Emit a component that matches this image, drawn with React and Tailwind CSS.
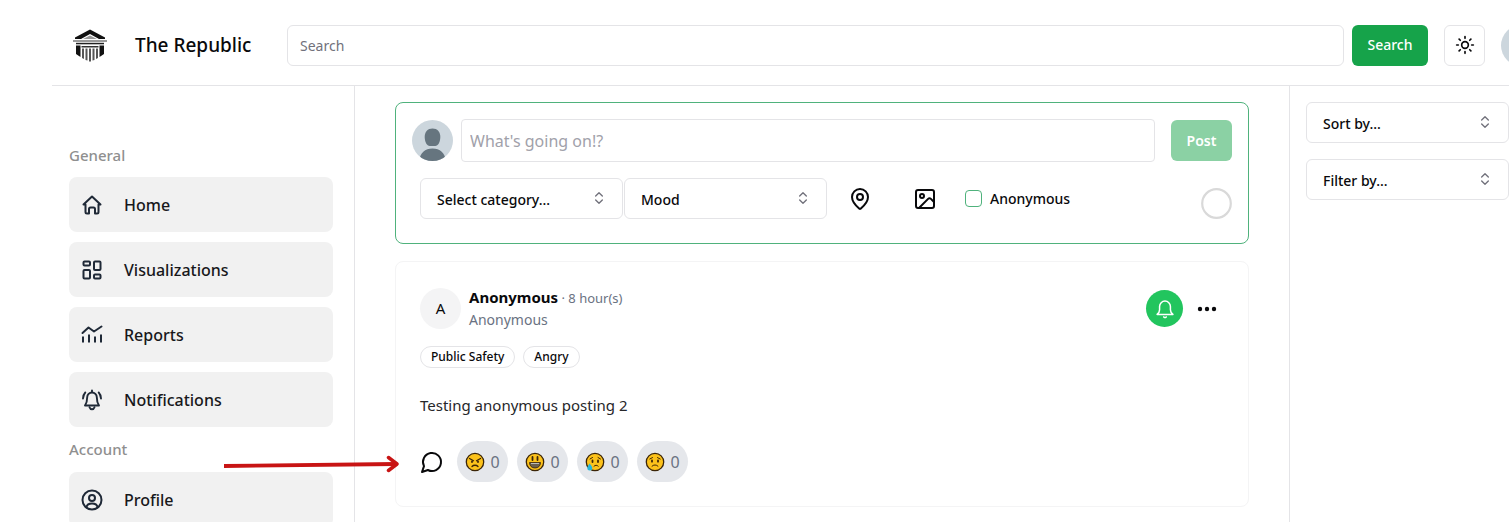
import { ChevronsUpDown, MapPin, Image, Sun } from "lucide-react";

const stroke = {
  viewBox: "0 0 24 24",
  fill: "none",
  stroke: "currentColor",
  strokeWidth: 2,
  strokeLinecap: "round",
  strokeLinejoin: "round",
  "aria-hidden": true,
};

function HomeIcon() {
  return (
    <svg {...stroke} className="size-6">
      <path d="M5.500 11.500H3.500L12 3.500l8.500 8H18.500V19a1.500 1.500 0 0 1-1.500 1.500h-2V16a1.500 1.500 0 0 0-1.500-1.500h-3A1.500 1.500 0 0 0 9 16v4.500H7A1.500 1.500 0 0 1 5.500 19z" />
    </svg>
  );
}

function DashboardIcon() {
  return (
    <svg {...stroke} className="size-6">
      <rect x="3.500" y="3.500" width="6.500" height="4" rx="1" />
      <rect x="14" y="3.500" width="6.500" height="8.500" rx="1" />
      <rect x="3.500" y="12" width="6.500" height="8.500" rx="1" />
      <rect x="14" y="16.500" width="6.500" height="4" rx="1" />
    </svg>
  );
}

function ReportsIcon() {
  return (
    <svg {...stroke} className="size-6">
      <path d="m2.500 10 6-5.500 5.500 4L21.500 3.500" />
      <path strokeLinecap="butt" d="M3 13.500V19.500M9 11.500V19.500M15 13.500V19.500M21 11.500V19.500" />
    </svg>
  );
}

function RingingBellIcon() {
  return (
    <svg {...stroke} strokeWidth="1.900" className="size-6">
      <path d="M12 2.500v2M12 4.500a4.800 4.800 0 0 0-4.800 4.800c0 4-.7 6-2.200 8.200h14c-1.500-2.200-2.200-4.200-2.200-8.200A4.800 4.800 0 0 0 12 4.500z" />
      <path d="M9.500 19.200c.5 1.600 1.400 2 2.500 2s2-.4 2.500-2" />
      <path d="M5.300 4.500C3.800 6 3.200 8 3 10.500M18.700 4.500c1.500 1.500 2.100 3.500 2.300 6" />
    </svg>
  );
}

function ProfileIcon() {
  return (
    <svg {...stroke} className="size-6">
      <circle cx="12" cy="12" r="9.500" />
      <circle cx="12" cy="10" r="3" />
      <path d="M6.500 19c.5-2.500 2.500-3.500 5.500-3.500s5 1 5.500 3.500" />
    </svg>
  );
}

function Logo() {
  return (
    <svg viewBox="0 0 36 34" className="h-[34px] w-9" aria-label="The Republic logo" role="img">
      <path d="M18 1.500 3 9.500v1.500h6L18 6l9 5h6V9.500z" fill="#111" />
      <path d="M18 7.500 11 11h14z" fill="#999" />
      <path d="M1 12.200h34v1.600H1z" fill="#777" />
      <path d="M4 14.800h28v1.500H4z" fill="#222" />
      <path d="M4 17.500h4.500V29L4 26zM27.500 17.500H32V26l-4.500 3z" fill="#111" />
      <path d="M9.500 18h17v1.500h-17z" fill="#333" />
      <path d="M10 20.500h2V31l-2-1zM13.500 20.500h2V32.500l-2-.6zM17 20.500h2V33.500h-2zM20.500 20.500h2v11.400l-2 .6zM24 20.500h2V30l-2 1z" fill="#555" />
    </svg>
  );
}

function PersonAvatar() {
  return (
    <svg viewBox="0 0 41 41" className="size-[41px] shrink-0" aria-hidden="true">
      <clipPath id="disc">
        <circle cx="20.500" cy="20.500" r="20.500" />
      </clipPath>
      <circle cx="20.500" cy="20.500" r="20.500" fill="#ccd6dd" />
      <g fill="#66757f" clipPath="url(#disc)">
        <path d="M20.500 8.500c4.800 0 7.800 3.200 7.800 8.500 0 5-2.300 9-5 9h-5.600c-2.700 0-5-4-5-9 0-5.300 3-8.500 7.800-8.500z" />
        <path d="M7 41c1-8 6-12.500 13.500-12.500S33 33 34 41z" />
      </g>
    </svg>
  );
}

function Emoji({ mood }) {
  const dark = "#3b2508";
  return (
    <svg viewBox="0 0 20 20" className="size-5" role="img" aria-label={mood}>
      <circle cx="10" cy="10" r="8.700" fill="#fcc21b" stroke={dark} strokeWidth="1.300" />
      {mood === "angry" && (
        <g fill="none" stroke={dark} strokeWidth="1.300" strokeLinecap="round">
          <path d="m4.500 6.500 4 2.200M15.500 6.500l-4 2.200M7 14.500c1.500-1.700 4.500-1.700 6 0" />
          <path strokeWidth="1.800" d="M7 9.300v.7M13 9.300v.7" />
        </g>
      )}
      {mood === "happy" && (
        <g>
          <path d="M7.500 5v3M12.500 5v3" stroke={dark} strokeWidth="1.800" strokeLinecap="round" />
          <path d="M4.500 10.500h11c0 3.500-2.300 5.500-5.500 5.500s-5.500-2-5.500-5.500z" fill="#6b5f4c" stroke={dark} strokeWidth=".8" />
          <path d="M6 11h8v1H6z" fill="#bbb" />
        </g>
      )}
      {mood === "crying" && (
        <g>
          <path d="M7.500 8.500v1.500M13 8.500v1.500" stroke={dark} strokeWidth="1.800" strokeLinecap="round" />
          <path d="m5 7 2.500-1.500M15.500 7 13 5.500M9 14.200c1.200-1.300 3-1.300 4.200 0" fill="none" stroke={dark} strokeLinecap="round" />
          <path d="M4.500 11.500c1.700 2 2.800 3 2.800 4.500a2.500 2.500 0 0 1-5 0c0-1.500 1.200-2.500 2.200-4.500z" fill="#29b6d8" />
        </g>
      )}
      {mood === "worried" && (
        <g>
          <path d="M7 8.500v1.200M13 8.500v1.200" stroke={dark} strokeWidth="1.800" strokeLinecap="round" />
          <path d="m4.800 7 2.700-1.400M15.200 7l-2.700-1.400M7 14.200c1.500-1.700 4.500-1.700 6 0" fill="none" stroke={dark} strokeLinecap="round" />
        </g>
      )}
    </svg>
  );
}

function NavItem({ icon, label }) {
  return (
    <li>
      <a href="#" className="flex h-[55px] items-center gap-5 rounded-lg bg-[#f1f1f1] px-[11px] text-base font-medium text-[#18181b]">
        <span className="text-[#1f2937]">{icon}</span>
        {label}
      </a>
    </li>
  );
}

function Select({ label, name }) {
  return (
    <div className="relative w-[203px] shrink-0">
      <select
        aria-label={name}
        className="block h-[41px] w-full appearance-none rounded-md border border-zinc-200 bg-white pt-0.5 pr-10 pl-4 text-sm font-medium text-zinc-950"
      >
        <option>{label}</option>
      </select>
      <ChevronsUpDown className="pointer-events-none absolute top-3 right-4 size-4 text-zinc-500" />
    </div>
  );
}

function Reaction({ mood }) {
  return (
    <button className="flex h-[41px] w-[51px] items-center justify-center gap-[5px] rounded-full bg-gray-200 text-base text-gray-500">
      <Emoji mood={mood} />0
    </button>
  );
}

function Tag({ children }) {
  return (
    <span className="flex h-[22px] items-center rounded-full border border-zinc-200 px-2.5 text-xs font-medium text-zinc-950">
      {children}
    </span>
  );
}

export default function App() {
  return (
    <div className="relative flex min-h-screen flex-col overflow-hidden bg-white pl-[52px] font-['Noto_Sans','Open_Sans',sans-serif] text-zinc-950">
      <header className="flex h-[86px] shrink-0 items-center border-b border-zinc-200 pt-[5px] pl-5">
        <a href="#" className="flex w-[215px] shrink-0 items-center gap-[27px] text-[19px] font-medium">
          <Logo />
          The Republic
        </a>
        <form className="-mr-[33px] flex flex-1 items-center gap-2">
          <input
            aria-label="Search"
            placeholder="Search"
            className="h-[41px] min-w-0 flex-1 rounded-md border border-zinc-200 px-3 text-sm placeholder:text-zinc-500"
          />
          <button type="button" className="h-[41px] w-[76px] rounded-md bg-[#16a34a] text-sm font-medium text-white">
            Search
          </button>
          <button
            type="button"
            aria-label="Toggle theme"
            className="mx-2 flex size-[41px] items-center justify-center rounded-md border border-zinc-200"
          >
            <Sun className="size-5" />
          </button>
          <PersonAvatar />
        </form>
      </header>

      <div className="flex flex-1">
        <nav className="w-[303px] shrink-0 border-r border-zinc-200 pt-[57px] pr-[21px] pl-[17px]">
          <h2 className="text-[15px] leading-6 font-medium text-[#8f8f8f]">General</h2>
          <ul className="mt-2.5 flex flex-col gap-2.5">
            <NavItem icon={<HomeIcon />} label="Home" />
            <NavItem icon={<DashboardIcon />} label="Visualizations" />
            <NavItem icon={<ReportsIcon />} label="Reports" />
            <NavItem icon={<RingingBellIcon />} label="Notifications" />
          </ul>
          <h2 className="mt-2.5 text-[15px] leading-6 font-medium text-[#8f8f8f]">Account</h2>
          <ul className="mt-[11px] h-[50px]">
            <NavItem icon={<ProfileIcon />} label="Profile" />
          </ul>
        </nav>

        <main className="flex min-w-0 flex-1 flex-col items-stretch gap-[17px] px-10 pt-4">
          <form className="rounded-lg border border-[#4fb27c] px-4 pt-4 pb-6">
            <div className="flex items-center">
              <PersonAvatar />
              <input
                aria-label="Post text"
                placeholder="What's going on!?"
                className="mr-4 ml-2 h-[43px] min-w-0 flex-1 rounded-sm border border-zinc-200 px-2 text-base placeholder:text-[#a1a1aa]"
              />
              <button type="button" disabled className="h-[41px] w-[61px] rounded-md bg-[#8bd1a4] text-sm font-semibold text-white">
                Post
              </button>
            </div>
            <div className="mt-4 flex items-center pl-2">
              <Select label="Select category..." name="Category" />
              <div className="w-px" />
              <Select label="Mood" name="Mood" />
              <button type="button" aria-label="Add location" className="ml-[21px]">
                <MapPin className="size-6" />
              </button>
              <button type="button" aria-label="Add image" className="ml-[41px]">
                <Image className="size-6" />
              </button>
              <input
                id="anonymous"
                type="checkbox"
                className="ml-7 size-[17px] appearance-none rounded-sm border border-[#4fb27c] bg-white"
              />
              <label htmlFor="anonymous" className="ml-2 text-sm font-medium">
                Anonymous
              </label>
              <svg viewBox="0 0 31 31" className="ml-auto size-[31px] self-end" aria-hidden="true">
                <circle cx="15.500" cy="15.500" r="14.300" fill="none" stroke="#d9d9d9" strokeWidth="2.200" />
              </svg>
            </div>
          </form>

          <article className="rounded-lg border border-zinc-100 p-6">
            <div className="flex items-center pr-[5px]">
              <div className="flex size-[41px] items-center justify-center rounded-full bg-zinc-100 text-[15px]">A</div>
              <div className="ml-2 flex-1 text-sm leading-[22px] text-gray-500">
                <p>
                  <strong className="text-[15px] font-bold text-zinc-950">Anonymous</strong>
                  <span className="text-[13px]"> · 8 hour(s)</span>
                </p>
                <p>Anonymous</p>
              </div>
              <button aria-label="Follow post" className="flex size-[37px] items-center justify-center rounded-full bg-[#22c55e] text-white">
                <svg {...stroke} strokeWidth="1.800" className="size-5">
                  <path d="M2.500 18.500h19c-2-1.500-3-3-3-5.500V9a6.500 6.500 0 0 0-13 0v4c0 2.500-1 4-3 5.500z" />
                  <path d="M10.500 21.500c.8.800 2.200.8 3 0" />
                </svg>
              </button>
              <button aria-label="More options" className="ml-3">
                <svg viewBox="0 0 24 24" className="size-6" fill="currentColor" aria-hidden="true">
                  <circle cx="5" cy="12" r="2.200" />
                  <circle cx="12" cy="12" r="2.200" />
                  <circle cx="19" cy="12" r="2.200" />
                </svg>
              </button>
            </div>
            <div className="mt-[15px] flex gap-2">
              <Tag>Public Safety</Tag>
              <Tag>Angry</Tag>
            </div>
            <p className="mt-[25px] text-[15px] leading-6 text-zinc-800">Testing anonymous posting 2</p>
            <div className="mt-6 flex items-center gap-[9px]">
              <button aria-label="Comments" className="mr-1">
                <svg {...stroke} className="size-6">
                  <path d="M7.900 20A9 9 0 1 0 4 16.100L2 22Z" />
                </svg>
              </button>
              <Reaction mood="angry" />
              <Reaction mood="happy" />
              <Reaction mood="crying" />
              <Reaction mood="worried" />
            </div>
          </article>
        </main>

        <aside className="flex w-[220px] shrink-0 flex-col gap-4 border-l border-zinc-200 pt-4 pl-4">
          <Select label="Sort by..." name="Sort" />
          <Select label="Filter by..." name="Filter" />
        </aside>
      </div>

      <svg viewBox="0 0 176 18" className="pointer-events-none absolute top-[455px] left-[223px] h-[18px] w-44" aria-hidden="true">
        <path d="M1 11 173 9" stroke="#c81414" strokeWidth="3.800" fill="none" />
        <path d="m165.500 2.500 8.500 6.500-8.500 6.500" stroke="#c81414" strokeWidth="3.500" strokeLinecap="round" strokeLinejoin="round" fill="none" />
      </svg>
    </div>
  );
}
